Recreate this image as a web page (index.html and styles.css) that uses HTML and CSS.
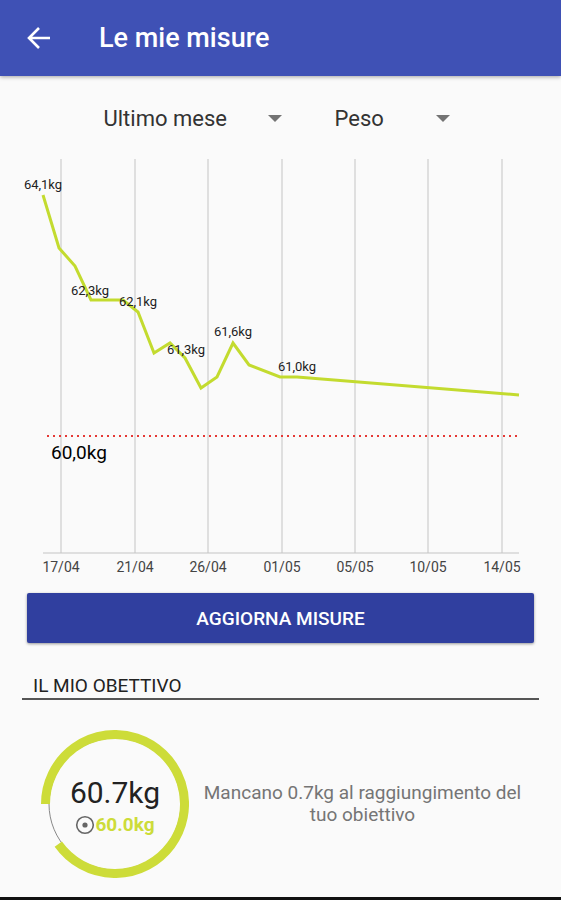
FILE: index.html
```
<!DOCTYPE html>
<html lang="it">
<head>
    <meta charset="UTF-8">
    <meta name="viewport" content="width=device-width, initial-scale=1.0">
    <title>Le mie misure</title>
    <link rel="stylesheet" href="styles.css">
</head>
<body>

    <header class="toolbar">
        <a class="back" href="#" aria-label="Indietro">
            <svg width="24" height="24" viewBox="0 0 24 24">
                <path d="M23 12H3M12 2L2 12l10 10" fill="none" stroke="#fff" stroke-width="2.6"/>
            </svg>
        </a>
        <h1>Le mie misure</h1>
    </header>

    <main>
        <div class="filters">
            <div class="spinner period">
                <select aria-label="Periodo">
                    <option>Ultimo mese</option>
                    <option>Ultimo anno</option>
                </select>
            </div>
            <div class="spinner measure">
                <select aria-label="Misura">
                    <option>Peso</option>
                    <option>Vita</option>
                </select>
            </div>
        </div>

        <svg class="chart" viewBox="0 0 561 430" role="img" aria-label="Andamento del peso">
            <path class="grid" d="M61 9V403M135 9V403M208 9V403M282 9V403M355 9V403M428 9V403M502 9V403M43 403H519"/>

            <polyline class="weight" points="43,45 59,98 75,116 91,150 123,150 138,162 154,203 170,193 185,208 201,238 217,227 233,193 249,215 280,227 297,227 519,245"/>
            <path class="target" d="M47 286H519"/>

            <g class="values">
                <text x="43" y="39">64,1kg</text>
                <text x="90" y="145">62,3kg</text>
                <text x="138" y="156">62,1kg</text>
                <text x="186" y="204">61,3kg</text>
                <text x="233" y="186">61,6kg</text>
                <text x="297" y="221">61,0kg</text>
            </g>
            <text class="target-label" x="51" y="309">60,0kg</text>

            <g class="dates">
                <text x="61" y="422">17/04</text>
                <text x="135" y="422">21/04</text>
                <text x="208" y="422">26/04</text>
                <text x="282" y="422">01/05</text>
                <text x="355" y="422">05/05</text>
                <text x="428" y="422">10/05</text>
                <text x="502" y="422">14/05</text>
            </g>
        </svg>

        <button class="update" type="button">AGGIORNA MISURE</button>

        <h2>IL MIO OBETTIVO</h2>

        <section class="goal">
            <div class="ring">
                <svg viewBox="0 0 148 148">
                    <circle cx="74" cy="74" r="66" fill="none" stroke="#888" stroke-width="1"/>
                    <path d="M4.500 74A69.500 69.500 0 1 1 17.300 114.200" fill="none" stroke="#cddc39" stroke-width="9"/>
                </svg>
                <div class="ring-text">
                    <span class="current">60.7kg</span>
                    <span class="wanted">
                        <svg width="20" height="20" viewBox="0 0 20 20">
                            <circle cx="10" cy="10" r="8.300" fill="none" stroke="#666" stroke-width="1.600"/>
                            <circle cx="10" cy="10" r="2.600" fill="#666"/>
                        </svg>
                        60.0kg
                    </span>
                </div>
            </div>
            <p>Mancano 0.7kg al raggiungimento del tuo obiettivo</p>
        </section>
    </main>

    <div class="nav-bar"></div>

</body>
</html>
```
FILE: styles.css
```
* {
    box-sizing: border-box;
    font-family: Roboto, "Noto Sans", sans-serif;
}

body {
    display: flex;
    flex-direction: column;
    min-height: 100vh;
    margin: 0;
    background: #fafafa;
    color: #222;
}

.toolbar {
    display: flex;
    align-items: center;
    gap: 48px;
    height: 76px;
    padding: 0 27px;
    background: #3f51b5;
    box-shadow: 0 1px 4px rgba(0, 0, 0, 0.35);
}

.back,
.back svg,
.chart,
.ring svg {
    display: block;
}

h1 {
    margin: 0;
    font-size: 27px;
    font-weight: 500;
    color: #fff;
}

.filters {
    display: flex;
    justify-content: center;
    gap: 53px;
    padding: 29px 8px 19px 0;
}

.spinner {
    display: flex;
    align-items: center;
}

.spinner select {
    flex: 1;
    min-width: 0;
    height: 26px;
    padding: 0;
    border: none;
    background: none;
    appearance: none;
    font-size: 22px;
    color: #333;
}

.spinner::after {
    content: "";
    border: 7px solid transparent;
    border-top-color: #737373;
    border-bottom: none;
}

.period {
    width: 178px;
}

.measure {
    width: 115px;
}

/* Grafico */
.chart {
    width: 100%;
}

.grid {
    fill: none;
    stroke: #c4c4c4;
    stroke-width: 1;
}

.weight {
    fill: none;
    stroke: #c3db2f;
    stroke-width: 3;
}

.target {
    stroke: #e53935;
    stroke-width: 2;
    stroke-dasharray: 2 4;
}

.values,
.dates {
    font-size: 13px;
    text-anchor: middle;
    fill: #222;
}

.dates {
    font-size: 14px;
    fill: #444;
}

.target-label {
    font-size: 19px;
    fill: #000;
}

.update {
    display: block;
    width: calc(100% - 54px);
    height: 50px;
    margin: 13px 27px 0;
    border: none;
    border-radius: 2px;
    background: #303f9f;
    box-shadow: 0 1px 3px rgba(0, 0, 0, 0.4);
    font-size: 19px;
    font-weight: 500;
    color: #fff;
}

h2 {
    margin: 31px 22px 0;
    padding: 0 11px;
    border-bottom: 2px solid #555;
    font-size: 19px;
    font-weight: 400;
    line-height: 24px;
}

/* Obiettivo */
.goal {
    display: flex;
    align-items: center;
    gap: 8px;
    padding: 30px 33px 19px 41px;
}

.ring {
    display: grid;
    flex: none;
    width: 148px;
}

.ring > * {
    grid-area: 1 / 1;
}

.ring-text {
    display: flex;
    flex-direction: column;
    align-items: center;
    justify-content: center;
    padding-top: 3px;
}

.current {
    font-size: 30px;
    line-height: 38px;
}

.wanted {
    display: flex;
    align-items: center;
    font-size: 19px;
    font-weight: 700;
    line-height: 26px;
    color: #cddc39;
}

.goal p {
    flex: 1;
    margin: 0;
    font-size: 19px;
    line-height: 22px;
    text-align: center;
    color: #757575;
}

.nav-bar {
    height: 3px;
    margin-top: auto;
    background: #111;
}
```
